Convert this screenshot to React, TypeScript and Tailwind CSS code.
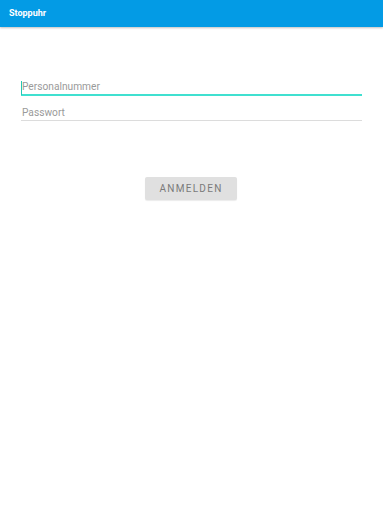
export default function App() {
  return (
    <div className="w-[383px] h-[512px] bg-white flex flex-col" style={{ fontFamily: 'Roboto, "Noto Sans", sans-serif' }}>
      {/* Toolbar */}
      <header className="h-[27px] flex-shrink-0 bg-[#039be5] flex items-center px-[9px] shadow-[0_1px_2px_rgba(0,0,0,0.25)] relative z-10">
        <span className="text-white text-[9px] font-bold leading-none">Stoppuhr</span>
      </header>

      {/* Form */}
      <main className="flex flex-col px-[21px] pt-[53px]">
        <div className="relative h-[16px] border-b-2 border-[#40e0d0] flex items-end">
          <span className="absolute left-0 top-[1px] w-px h-[14px] bg-[#26c6b5]" />
          <span className="text-[10.2px] leading-none text-[#9a9a9a] pb-[2px] pl-px">Personalnummer</span>
        </div>
        <div className="h-[17px] mt-[8px] border-b border-[#dcdcdc] flex items-end">
          <span className="text-[10.2px] leading-none text-[#9a9a9a] pb-[2px] pl-px">Passwort</span>
        </div>

        <div className="flex justify-center mt-[56px] pr-[1px]">
          <button className="w-[92px] h-[23px] bg-[#e0e0e0] rounded-[2px] text-[10px] font-normal tracking-[1.3px] text-[#7a7a7a] shadow-[0_1px_1px_rgba(0,0,0,0.08)]">
            ANMELDEN
          </button>
        </div>
      </main>
    </div>
  );
}
